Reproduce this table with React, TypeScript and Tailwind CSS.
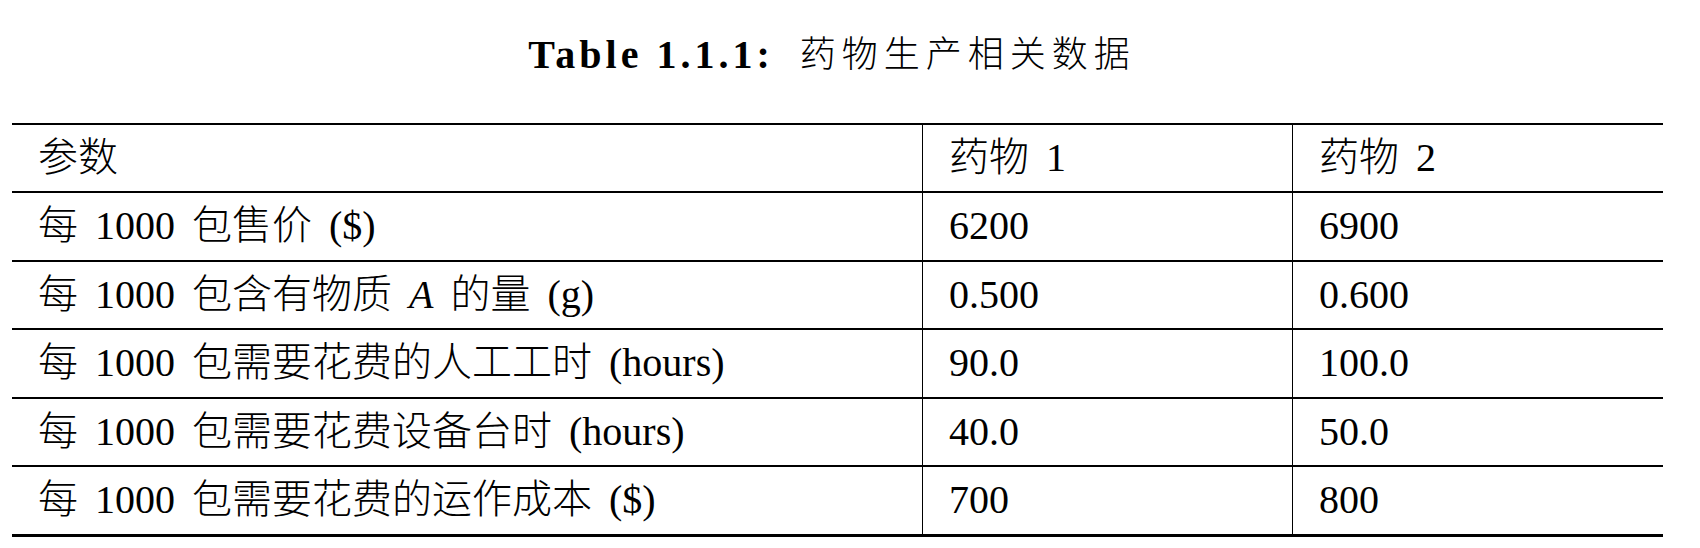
import React from "react";

// rows of the drug production table
const rows: { label: React.ReactNode; a: string; b: string }[] = [
  { label: "每 1000 包售价 ($)", a: "6200", b: "6900" },
  {
    label: (
      <>
        每 1000 包含有物质 <i>A</i> 的量 (g)
      </>
    ),
    a: "0.500",
    b: "0.600",
  },
  { label: "每 1000 包需要花费的人工工时 (hours)", a: "90.0", b: "100.0" },
  { label: "每 1000 包需要花费设备台时 (hours)", a: "40.0", b: "50.0" },
  { label: "每 1000 包需要花费的运作成本 ($)", a: "700", b: "800" },
];

const font = "font-['Liberation_Serif','Noto_Sans_CJK_SC',serif]";

function Row({
  cells,
  last,
  header,
}: {
  cells: React.ReactNode[];
  last?: boolean;
  header?: boolean;
}) {
  return (
    <div
      className={`grid grid-cols-[910px_370px_371px] border-black ${
        last ? "border-b-[3px]" : "border-b-2"
      }`}
    >
      {cells.map((c, i) => (
        <div
          key={i}
          className={`flex items-center pl-[26px] ${
            header ? "h-[66px]" : "h-[66.5px]"
          } ${i > 0 ? "border-l border-black" : ""}`}
        >
          <span className="text-[40px] leading-none font-light text-black [word-spacing:7px] whitespace-nowrap">
            {c}
          </span>
        </div>
      ))}
    </div>
  );
}

export default function App() {
  return (
    <div className={`w-[1700px] h-[548px] bg-white ${font}`}>
      <div className="h-[123px] pt-[35px] flex justify-center pr-[36px]">
        <div className="flex items-center h-[40px] leading-[40px] text-black">
          <span className="text-[40px] font-bold tracking-[4px]">
            Table 1.1.1:
          </span>
          <span className="ml-[26px] text-[36px] tracking-[6px] font-light">
            药物生产相关数据
          </span>
        </div>
      </div>
      <div className="ml-[12px] w-[1651px] border-t-2 border-black">
        <Row header cells={["参数", "药物 1", "药物 2"]} />
        {rows.map((r, i) => (
          <Row
            key={i}
            last={i === rows.length - 1}
            cells={[r.label, r.a, r.b]}
          />
        ))}
      </div>
    </div>
  );
}
